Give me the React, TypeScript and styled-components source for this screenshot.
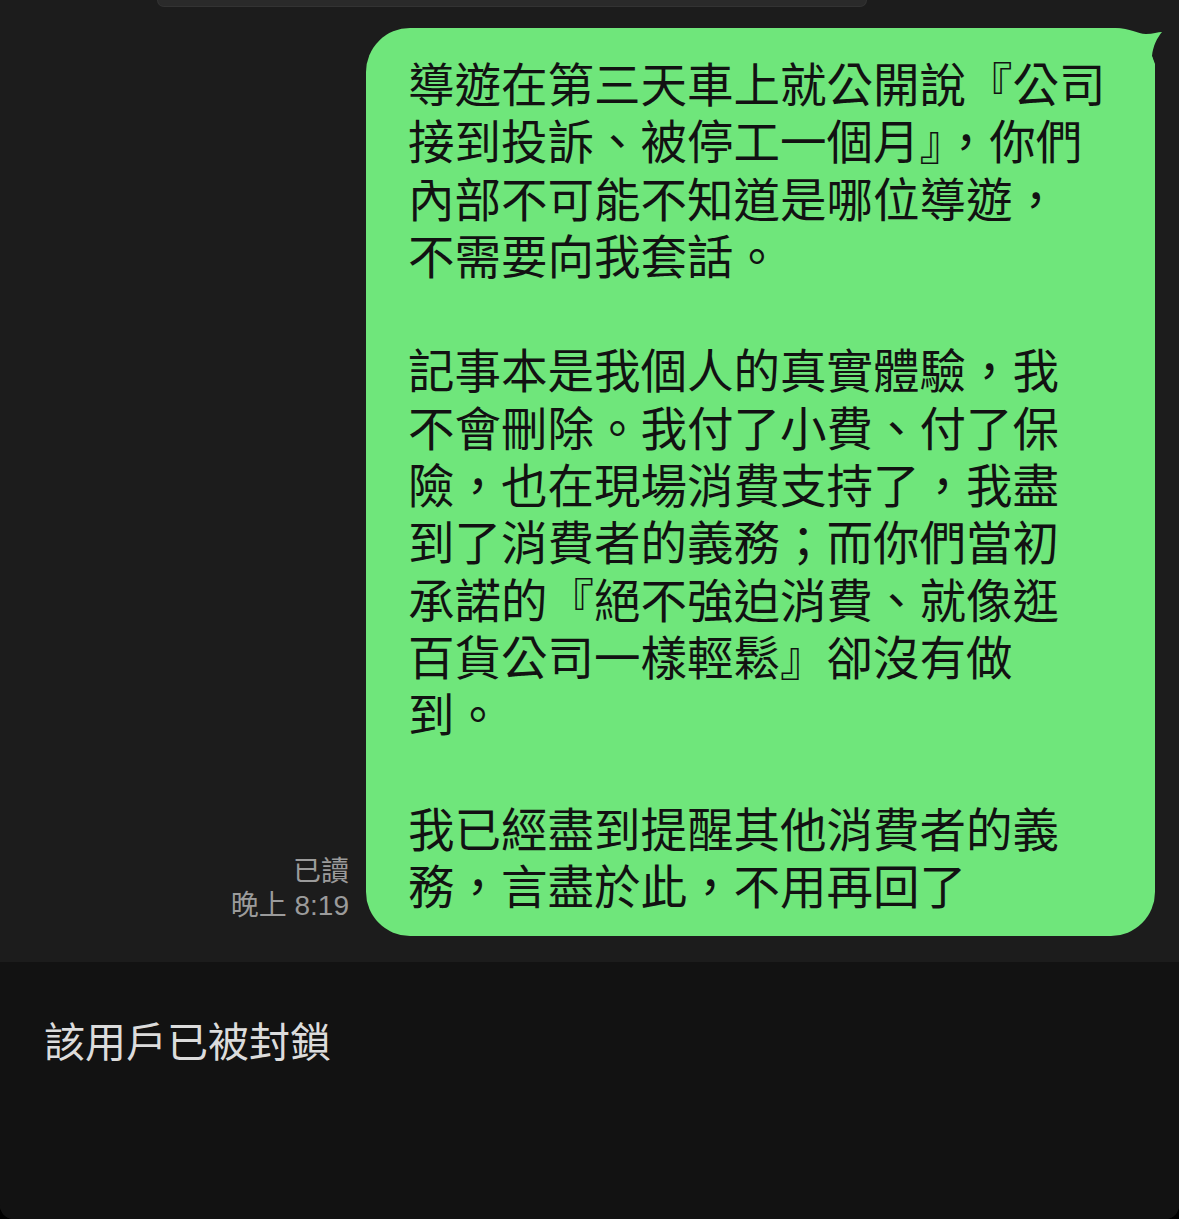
import React, { FC } from 'react';
import styled, { createGlobalStyle } from 'styled-components';

const GlobalStyle = createGlobalStyle`
  html, body {
    margin: 0;
    padding: 0;
    background: #000;
  }
  #root {
    width: 1179px;
    height: 1219px;
  }
`;

const lines = [
  '導遊在第三天車上就公開說『公司',
  '接到投訴、被停工一個月』，你們',
  '內部不可能不知道是哪位導遊，',
  '不需要向我套話。',
  '',
  '記事本是我個人的真實體驗，我',
  '不會刪除。我付了小費、付了保',
  '險，也在現場消費支持了，我盡',
  '到了消費者的義務；而你們當初',
  '承諾的『絕不強迫消費、就像逛',
  '百貨公司一樣輕鬆』卻沒有做',
  '到。',
  '',
  '我已經盡到提醒其他消費者的義',
  '務，言盡於此，不用再回了',
];

const App: FC = () => {
  return (
    <>
      <GlobalStyle />
      <Screen>
        <ChatArea>
          <PrevBubble />
          <MessageRow>
            <Meta>
              <MetaLine>已讀</MetaLine>
              <MetaLine>晚上 8:19</MetaLine>
            </Meta>
            <Bubble>
              <Tail viewBox="0 0 60 50" width={60} height={50}>
                <path
                  d="M0 0 L10 0 C26 0 32 6 41 6 C48 6 53 4 57 4 C52 10 48 18 47 28 L50 36 L50 50 L0 50 Z"
                  fill="#6fe67b"
                />
              </Tail>
              {lines.map((line, i) => (
                <Line key={i}>{line || '\u00a0'}</Line>
              ))}
            </Bubble>
          </MessageRow>
        </ChatArea>
        <BlockedBar>
          <BlockedText>該用戶已被封鎖</BlockedText>
        </BlockedBar>
      </Screen>
    </>
  );
};

const Screen = styled.div`
  width: 1179px;
  height: 1219px;
  display: flex;
  flex-direction: column;
  background: #1c1c1c;
  border-radius: 0 0 14px 14px;
  overflow: hidden;
  font-family: 'Noto Sans CJK TC', 'Noto Sans', sans-serif;
`;

const ChatArea = styled.div`
  display: flex;
  flex-direction: column;
  padding-bottom: 26px;
`;

const PrevBubble = styled.div`
  height: 6px;
  width: 708px;
  margin-left: 157px;
  background: #2a2a2a;
  border: 1px solid #333;
  border-top: none;
  border-radius: 0 0 22px 22px;
`;

const MessageRow = styled.div`
  display: flex;
  justify-content: flex-end;
  align-items: flex-end;
  gap: 17px;
  margin-top: 21px;
  padding-right: 24px;
`;

const Meta = styled.div`
  display: flex;
  flex-direction: column;
  align-items: flex-end;
  padding-bottom: 13px;
`;

const MetaLine = styled.span`
  font-family: 'Liberation Sans', 'Noto Sans CJK TC', sans-serif;
  font-size: 28px;
  line-height: 34px;
  color: #9b9b9b;
  white-space: nowrap;
`;

const Bubble = styled.div`
  position: relative;
  width: 789px;
  box-sizing: border-box;
  padding: 25px 20px 24px 42px;
  background: #6fe67b;
  border-radius: 44px;
`;

const Tail = styled.svg`
  position: absolute;
  top: 0;
  right: -10px;
`;

const Line = styled.div`
  font-size: 46.5px;
  line-height: 57.3px;
  height: 57.3px;
  color: #121212;
  white-space: nowrap;
`;

const BlockedBar = styled.div`
  flex: 1;
  background: #121212;
  padding: 15px 44px 0;
`;

const BlockedText = styled.div`
  font-size: 41px;
  line-height: 50px;
  color: #dcdcdc;
  margin-top: 37px;
`;

export default App;
